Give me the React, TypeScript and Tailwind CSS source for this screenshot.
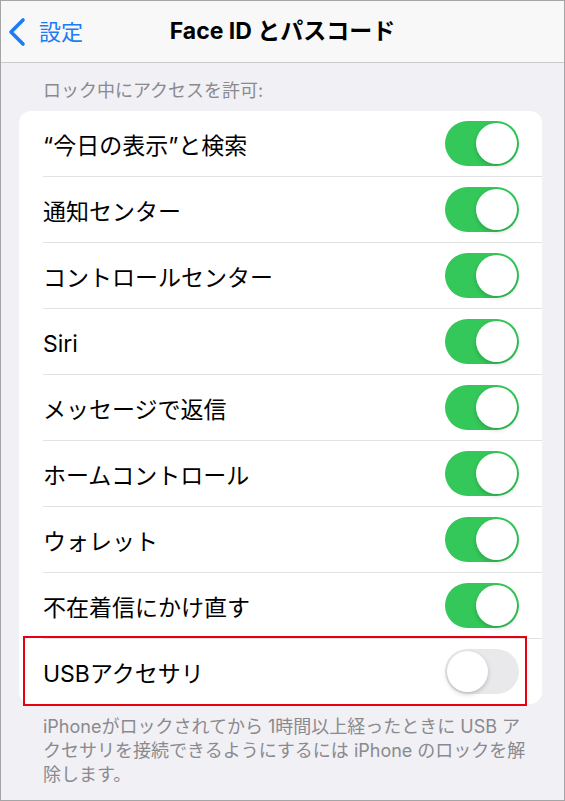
import React from "react";

const rows: { label: string; on: boolean }[] = [
  { label: "“今日の表示”と検索", on: true },
  { label: "通知センター", on: true },
  { label: "コントロールセンター", on: true },
  { label: "Siri", on: true },
  { label: "メッセージで返信", on: true },
  { label: "ホームコントロール", on: true },
  { label: "ウォレット", on: true },
  { label: "不在着信にかけ直す", on: true },
  { label: "USBアクセサリ", on: false },
];

const font = {
  fontFamily: 'Inter, "Noto Sans CJK JP", "Noto Sans", sans-serif',
};

function Toggle({ on }: { on: boolean }) {
  return on ? (
    <div className="w-[74px] h-[45px] rounded-full bg-[#34c759] flex items-center justify-end pr-[2px]">
      <div className="w-[41px] h-[41px] rounded-full bg-white shadow-[0_2px_4px_rgba(0,0,0,0.18)]" />
    </div>
  ) : (
    <div className="w-[74px] h-[45px] rounded-full bg-[#e9e9eb] flex items-center justify-start pl-[2px]">
      <div className="w-[41px] h-[41px] rounded-full bg-white shadow-[0_2px_5px_rgba(0,0,0,0.2)]" />
    </div>
  );
}

export default function App() {
  return (
    <div
      className="w-[565px] h-[801px] border border-[#a5a5a5] bg-[#f1f0f5] flex flex-col overflow-hidden"
      style={font}
    >
      {/* navigation bar */}
      <div className="relative h-[62px] shrink-0 bg-[#f8f8f8] border-b border-[#cacacd] flex items-center justify-center">
        <div className="absolute left-[6px] top-0 h-full flex items-center gap-[12px] text-[#1b7cf4]">
          <svg width="20" height="30" viewBox="0 0 20 30" fill="none">
            <path
              d="M16 3 L4 15 L16 27"
              stroke="currentColor"
              strokeWidth="3.6"
              strokeLinecap="round"
              strokeLinejoin="round"
            />
          </svg>
          <span className="text-[22px] leading-none">設定</span>
        </div>
        <span className="text-[23px] font-bold text-black leading-none">
          Face ID とパスコード
        </span>
      </div>

      {/* section header */}
      <div className="pl-[42px] pt-[16px] h-[48px] text-[18px] leading-[24px] text-[#8a8a8e]">
        ロック中にアクセスを許可:
      </div>

      {/* settings card */}
      <div className="ml-[18px] mr-[22px] bg-white rounded-[12px] flex flex-col">
        {rows.map((r, i) => (
          <div key={r.label} className="relative">
            <div className="h-[65px] pl-[24px] pr-[23px] flex items-center justify-between">
              <span className="pt-[5px] text-[23px] text-black leading-none">{r.label}</span>
              <Toggle on={r.on} />
            </div>
            {i < rows.length - 1 && <div className="ml-[24px] h-px bg-[#e2e2e5]" />}
            {!r.on && (
              <div className="absolute left-[4px] top-[-3px] w-[504px] h-[70px] border-2 border-[#e60012]" />
            )}
          </div>
        ))}
      </div>

      {/* footer note */}
      <div className="pl-[42px] mt-[11px] text-[18px] leading-[24px] text-[#8a8a8e] whitespace-nowrap">
        <div>iPhoneがロックされてから 1時間以上経ったときに USB ア</div>
        <div>クセサリを接続できるようにするには iPhone のロックを解</div>
        <div>除します。</div>
      </div>
    </div>
  );
}
